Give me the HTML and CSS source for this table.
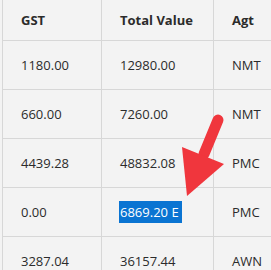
FILE: index.html
```html
<!DOCTYPE html>
<html>
<head>
<meta charset="utf-8">
<link rel="stylesheet" href="styles.css">
</head>
<body>
<div class="wrap">
  <table class="grid">
    <colgroup><col class="c1"><col class="c2"><col class="c3"></colgroup>
    <thead>
      <tr><th>GST</th><th>Total Value</th><th>Agt</th></tr>
    </thead>
    <tbody>
      <tr><td>1180.00</td><td>12980.00</td><td>NMT</td></tr>
      <tr><td>660.00</td><td>7260.00</td><td>NMT</td></tr>
      <tr><td>4439.28</td><td>48832.08</td><td>PMC</td></tr>
      <tr><td>0.00</td><td><span class="sel">6869.20 E</span></td><td>PMC</td></tr>
      <tr><td>3287.04</td><td>36157.44</td><td>AWN</td></tr>
    </tbody>
  </table>
  <svg class="arrow" width="271" height="270" viewBox="0 0 271 270">
    <line x1="218" y1="120" x2="204" y2="154" stroke="#f0363d" stroke-width="11" stroke-linecap="round"/>
    <polygon points="182,147 224,164 187,196" fill="#f0363d"/>
  </svg>
</div>
</body>
</html>
```
FILE: styles.css
```css
html, body {
  margin: 0;
  padding: 0;
  background: #f3f3f3;
}
.wrap {
  position: relative;
  width: 271px;
  height: 270px;
  overflow: hidden;
}
.grid {
  border-collapse: collapse;
  margin-left: 2px;
  width: 292px;
  font-family: "Open Sans", "Noto Sans", sans-serif;
  font-size: 13px;
  color: #2b2b2b;
  table-layout: fixed;
}
.c1 { width: 99px; }
.c2 { width: 112px; }
.c3 { width: 81px; }
.grid th, .grid td {
  border: 1px solid #d7d7d7;
  text-align: left;
  padding: 0 0 0 18px;
  white-space: nowrap;
  overflow: hidden;
}
.grid th {
  height: 40px;
  font-weight: 700;
  border-top: none;
}
.grid td {
  height: 48px;
}
.sel {
  background: #0a74d2;
  color: #fff;
  padding: 2px 3px 2px 1px;
  margin-left: -1px;
}
.arrow {
  position: absolute;
  left: 0;
  top: 0;
}
```
